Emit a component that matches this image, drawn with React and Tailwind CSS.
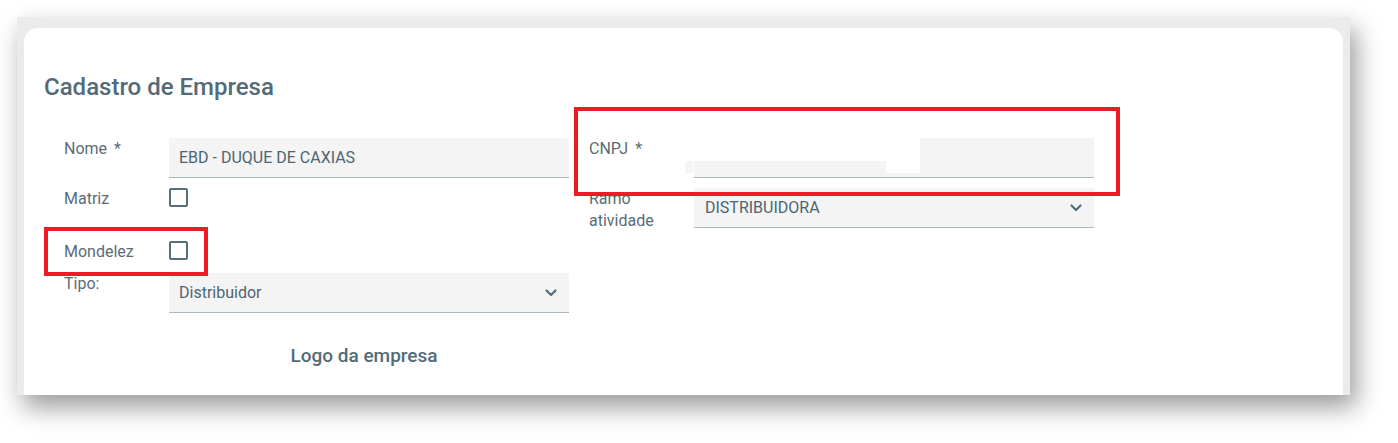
import React from 'react';

const Chevron = () => (
  <svg width="12" height="8" viewBox="0 0 12 8" fill="none" stroke="#546e7a" strokeWidth="2.2" strokeLinecap="round" strokeLinejoin="round">
    <polyline points="1.5,1.5 6,6 10.5,1.5" />
  </svg>
);

const Label = ({ children, className = '' }) => (
  <div className={`w-[105px] shrink-0 text-[16px] leading-[22px] text-[#5b6c76] ${className}`}>{children}</div>
);

const TextInput = ({ value }) => (
  <div className="w-[400px] h-[40px] bg-[#f4f4f4] border-b border-[#a9b7bf] flex items-center pl-[10px] text-[16px] text-[#4f6470]">
    {value}
  </div>
);

const Select = ({ value, pad = 'pl-[10px]' }) => (
  <div className={`w-[400px] h-[40px] bg-[#f4f4f4] border-b border-[#a9b7bf] flex items-center justify-between ${pad} pr-[12px] text-[16px] text-[#4f6470]`}>
    <span>{value}</span>
    <Chevron />
  </div>
);

const Checkbox = () => (
  <div className="w-[19px] h-[19px] rounded-[2px] border-2 border-[#546e7a] bg-white" />
);

const App = () => {
  return (
    <div className="w-full h-[443px] bg-white pt-[17px] pl-[17px] font-['Roboto',sans-serif]">
      <div className="w-[1333px] h-[378px] bg-[#ebebeb] pt-[11px] px-[7px] shadow-[6px_12px_24px_rgba(0,0,0,0.4)]">
        <div className="relative h-full bg-white rounded-t-[14px] pl-[20px] pt-[45px]">
          <h1 className="text-[24px] leading-[28px] font-medium text-[#536b78]">Cadastro de Empresa</h1>

          <div className="mt-[37px] flex">
            {/* coluna esquerda */}
            <div className="pl-[20px] w-[525px]">
              <div className="flex">
                <Label>Nome<span className="ml-[7px]">*</span></Label>
                <TextInput value="EBD - DUQUE DE CAXIAS" />
              </div>
              <div className="flex mt-[10px]">
                <Label className="leading-[20px]">Matriz</Label>
                <Checkbox />
              </div>
              <div className="flex mt-[31px]">
                <Label className="leading-[20px]">Mondelez</Label>
                <Checkbox />
              </div>
              <div className="flex mt-[10px]">
                <Label>Tipo:</Label>
                <Select value="Distribuidor" />
              </div>
              <div className="w-[640px] -ml-[20px] mt-[31px] text-center text-[19px] leading-[24px] font-medium text-[#536b78]">
                Logo da empresa
              </div>
            </div>

            {/* coluna direita */}
            <div className="pl-[20px]">
              <div className="flex">
                <Label>CNPJ<span className="ml-[7px]">*</span></Label>
                <TextInput value="" />
              </div>
              <div className="flex mt-[10px]">
                <Label>Ramo atividade</Label>
                <Select value="DISTRIBUIDORA" pad="pl-[11px]" />
              </div>
            </div>
          </div>

          {/* tarjas de ocultação do CNPJ */}
          <div className="absolute left-[669px] top-[110px] w-[227px] h-[23px] bg-white" />
          <div className="absolute left-[862px] top-[133px] w-[34px] h-[12px] bg-white" />
          <div className="absolute left-[661px] top-[133px] w-[8px] h-[12px] bg-[#f4f4f4]" />

          {/* marcações em vermelho */}
          <div className="absolute left-[550px] top-[79px] w-[546px] h-[89px] border-[4px] border-[#ed1c24]" />
          <div className="absolute left-[20px] top-[199px] w-[164px] h-[49px] border-[4px] border-[#ed1c24]" />
        </div>
      </div>
    </div>
  );
};

export default App;
